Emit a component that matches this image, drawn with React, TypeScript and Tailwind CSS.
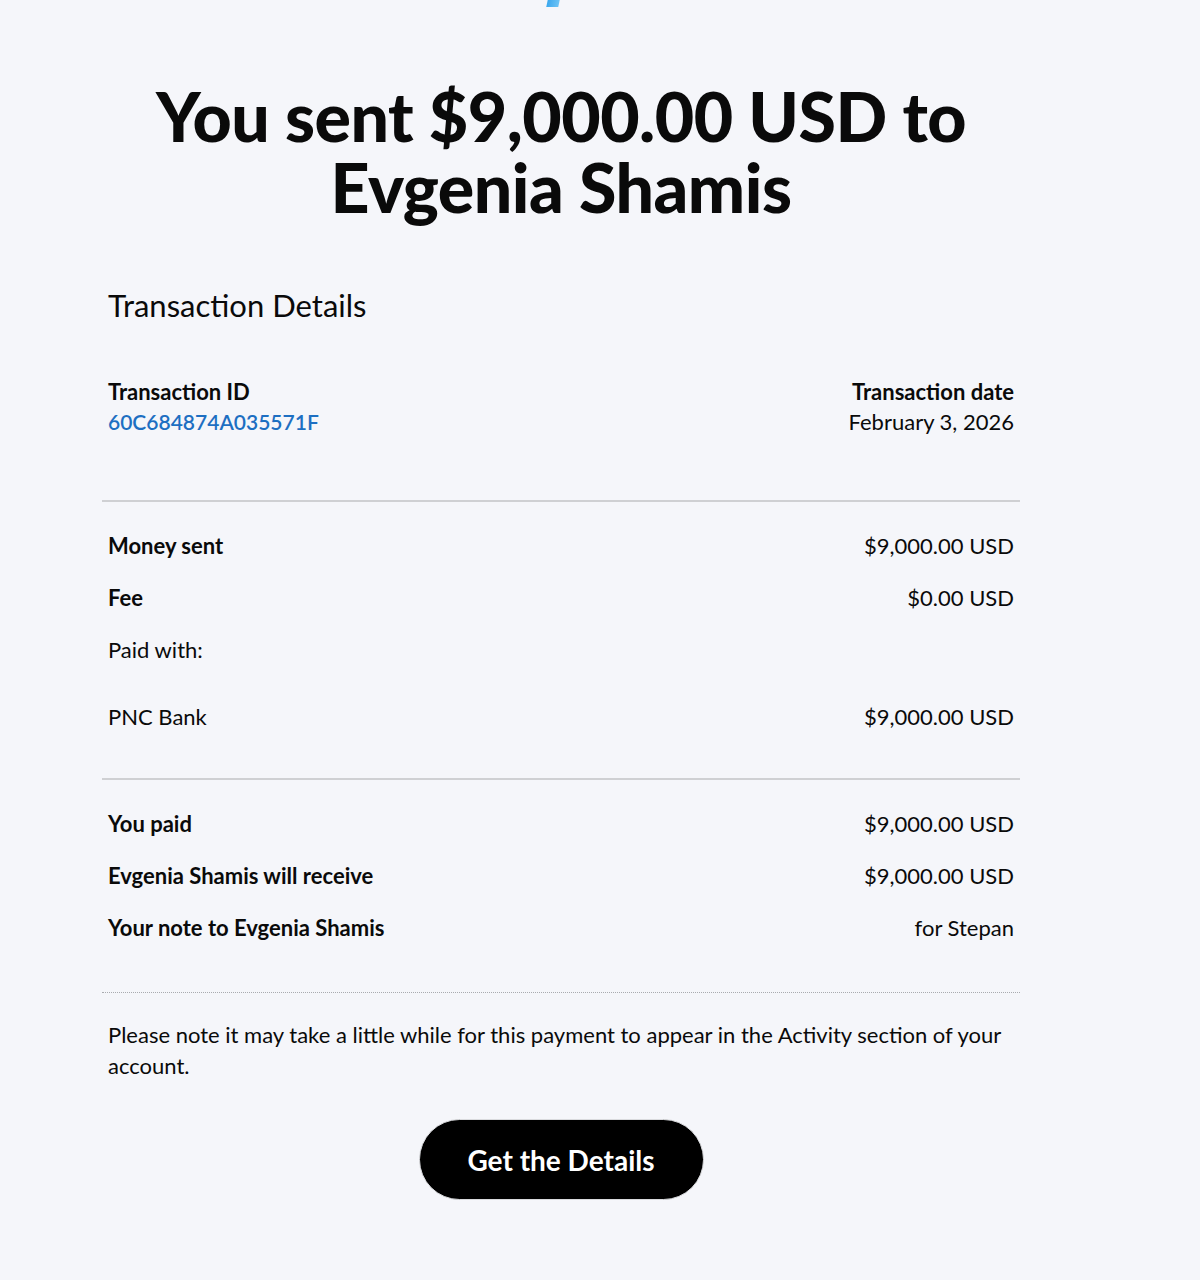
import React from "react";

function Row({ label, value, bold = true }: { label: string; value: string; bold?: boolean }) {
  return (
    <div className="flex h-[52px] items-center justify-between">
      <span className={bold ? "font-bold" : "font-normal"}>{label}</span>
      <span>{value}</span>
    </div>
  );
}

export default function App() {
  return (
    <div className="min-h-[1280px] bg-[#f5f6fa] text-[#0a0a0a] font-['Lato',_'Noto_Sans',_sans-serif]">
      <div className="h-[7px] w-[12px] ml-[547px] bg-gradient-to-r from-[#3aa8ee] to-[#6cc3f5] skew-x-[-12deg]" />
      <div className="ml-[102px] w-[918px]">
        <h1 className="mt-[73px] text-center text-[68px] leading-[71px] font-black tracking-[-0.5px]">
          You sent $9,000.00 USD to
          <br />
          Evgenia Shamis
        </h1>
        <div className="px-[6px]">
          <h2 className="mt-[65px] text-[31px] leading-[36px] font-normal">Transaction Details</h2>
          <div className="mt-[54px] flex justify-between text-[22px] leading-[30px]">
            <div>
              <div className="font-bold">Transaction ID</div>
              <div className="font-semibold text-[21px] text-[#1d6fc2]">60C684874A035571F</div>
            </div>
            <div className="text-right">
              <div className="font-bold">Transaction date</div>
              <div>February 3, 2026</div>
            </div>
          </div>
        </div>
        <div className="mt-[63px] border-t-2 border-[#cfd0d3]" />
        <div className="px-[6px] mt-[17px] text-[22px]">
          <Row label="Money sent" value="$9,000.00 USD" />
          <Row label="Fee" value="$0.00 USD" />
          <Row label="Paid with:" value="" bold={false} />
          <div className="mt-[15px]">
            <Row label="PNC Bank" value="$9,000.00 USD" bold={false} />
          </div>
        </div>
        <div className="mt-[36px] border-t-2 border-[#cfd0d3]" />
        <div className="px-[6px] mt-[17px] text-[22px]">
          <Row label="You paid" value="$9,000.00 USD" />
          <Row label="Evgenia Shamis will receive" value="$9,000.00 USD" />
          <Row label="Your note to Evgenia Shamis" value="for Stepan" />
        </div>
        <div className="mt-[39px] border-t border-dotted border-[#a9abaf]" />
        <p className="px-[6px] mt-[26px] text-[22px] leading-[31px]">
          Please note it may take a little while for this payment to appear in the Activity section of your account.
        </p>
        <div className="mt-[38px] flex justify-center">
          <button className="h-[81px] w-[285px] rounded-full bg-black text-white text-[28px] font-bold border border-[#d9dadd]">
            Get the Details
          </button>
        </div>
      </div>
    </div>
  );
}
